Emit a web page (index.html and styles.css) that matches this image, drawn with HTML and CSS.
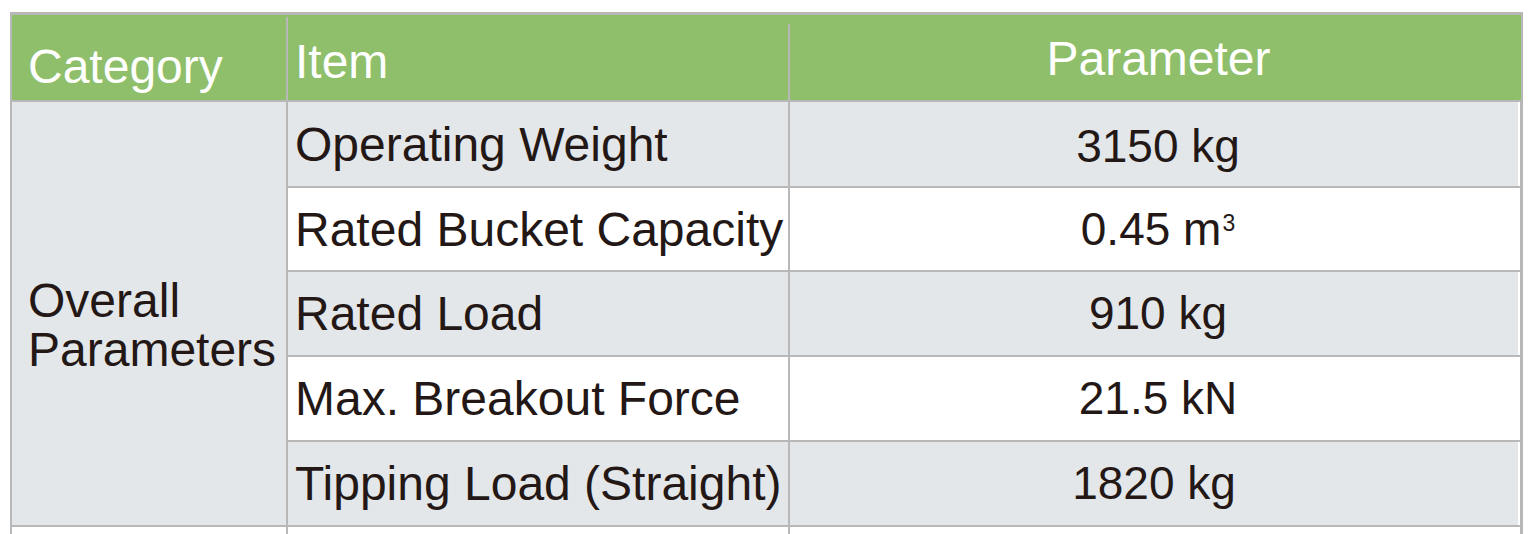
FILE: index.html
```html
<!DOCTYPE html>
<html lang="en">
<head>
<meta charset="utf-8">
<title>Specifications</title>
<link rel="stylesheet" href="styles.css">
</head>
<body>
<div class="sheet">
  <div class="head">
    <div class="hcell h-cat">Category</div>
    <div class="hcell h-item">Item</div>
    <div class="hcell h-param">Parameter</div>
  </div>
  <div class="cat">Overall<br>Parameters</div>
  <div class="item shade">Operating Weight</div>
  <div class="val shade v-first"><span>3150 kg</span></div>
  <div class="item">Rated Bucket Capacity</div>
  <div class="val"><span>0.45 m<sup class="sup">3</sup></span></div>
  <div class="item shade">Rated Load</div>
  <div class="val shade"><span>910 kg</span></div>
  <div class="item">Max. Breakout Force</div>
  <div class="val"><span>21.5 kN</span></div>
  <div class="item shade">Tipping Load (Straight)</div>
  <div class="val shade v-last"><span>1820 kg</span></div>
  <div class="blank"></div>
  <div class="blank"></div>
  <div class="blank"></div>
</div>
</body>
</html>
```

FILE: styles.css
```css
html, body {
  margin: 0;
  padding: 0;
  background: #ffffff;
  overflow: hidden;
}

body {
  font-family: "Liberation Sans", Arial, sans-serif;
  color: #231815;
}

.sheet {
  margin: 12px 0 0 10px;
  width: 1513px;
  box-sizing: border-box;
  background: #b8b8b8;
  padding: 3px 3px 0 2px;
  display: grid;
  grid-template-columns: 274px 500px 730px;
  grid-template-rows: 85px 84px 82px 83px 83px 83px 60px;
  column-gap: 2px;
  row-gap: 2px;
}

.head {
  grid-column: 1 / -1;
  display: grid;
  grid-template-columns: 274px 500px 731px;
  column-gap: 2px;
  background: #8fbf6a;
  color: #ffffff;
  font-size: 48px;
  margin-right: -1px;
}

.hcell {
  position: relative;
  display: flex;
  align-items: center;
  line-height: 54px;
}

.h-cat {
  padding: 18px 0 0 16px;
}

.h-item {
  padding: 8px 0 0 7px;
}

.h-param {
  justify-content: center;
  padding: 2px 0 0 6px;
}

.h-item::before,
.h-param::before {
  content: "";
  position: absolute;
  left: -2px;
  bottom: 0;
  width: 2px;
  background: #b8b8b8;
}

.h-item::before {
  top: 2px;
}

.h-param::before {
  top: 9px;
}

.cat {
  grid-row: 2 / span 5;
  grid-column: 1;
  background: #e3e7ea;
  font-size: 48px;
  line-height: 49px;
  display: flex;
  align-items: center;
  padding: 22px 0 0 16px;
}

.item,
.val {
  background: #ffffff;
  display: flex;
  align-items: center;
  white-space: nowrap;
}

.item {
  font-size: 48px;
  padding-left: 7px;
}

.val {
  font-size: 46px;
  line-height: 53px;
  justify-content: center;
  padding-left: 6px;
  box-shadow: inset -2px 0 0 #ffffff;
}

.shade {
  background: #e3e7ea;
}

.v-first {
  padding-top: 4px;
}

.v-last {
  padding-right: 8px;
}

.sup {
  font-size: 23px;
  line-height: 0;
  vertical-align: 14px;
  margin-left: 1px;
}

.blank {
  background: #ffffff;
}
```
